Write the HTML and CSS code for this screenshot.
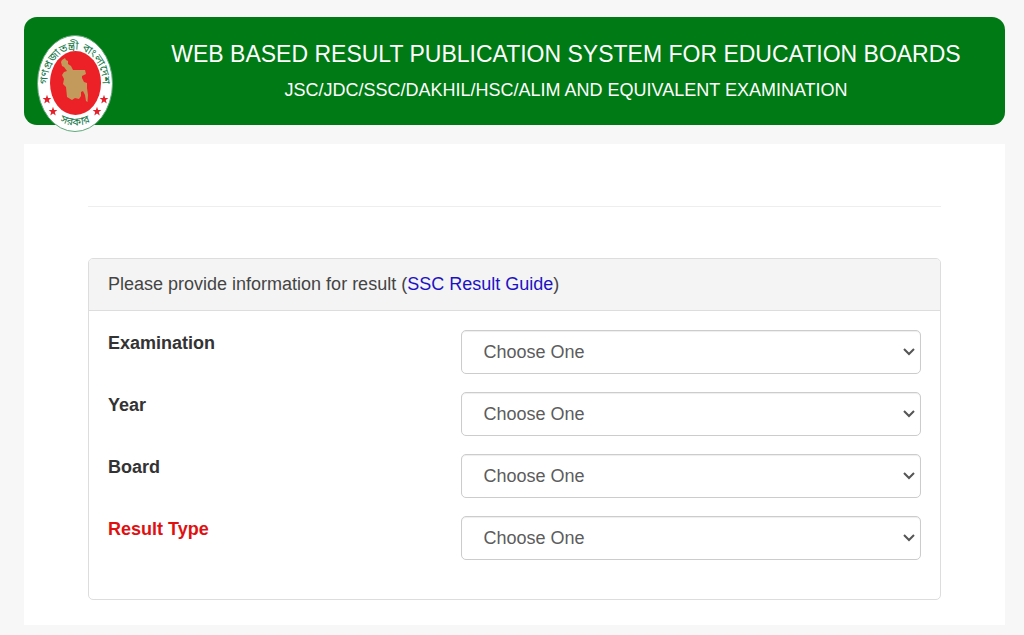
FILE: index.html
```html
<!DOCTYPE html>
<html lang="en">
<head>
<meta charset="utf-8">
<meta name="viewport" content="width=device-width, initial-scale=1">
<title>Web Based Result Publication System for Education Boards</title>
<link rel="stylesheet" href="styles.css">
</head>
<body>
<div class="page">
  <header class="banner">
    <svg class="seal" viewBox="0 0 76 97" role="img" aria-label="Government seal">
      <defs>
        <path id="arc-top" d="M11.800 59 A27.500 34 0 1 1 64.200 59"/>
        <path id="arc-bottom" d="M15 82 Q38 99 61 82"/>
      </defs>
      <ellipse cx="38" cy="48.500" rx="37.500" ry="48" fill="#fff" stroke="#5fa977"/>
      <ellipse cx="38.500" cy="48" rx="25.500" ry="32" fill="#ec2027"/>
      <path fill="#c39a5b" d="M24 27 L25 25 L28 23 L29 25 L31 26 L31 29 L34 31 L36 35 L48 35 L49 39 L45 41 L45 43 L47 47 L50 48 L50 53 L51 60 L50.500 67 L49 66 L48 60 L46 56 L44 57 L44 61 L42 64 L38 63 L35 65 L30 62 L29 52 L26 49 L27 44 L25 40 L27 37 L30 36 L27 32 L25 31 Z"/>
      <g class="seal-text">
        <text lang="bn"><textPath href="#arc-top" startOffset="50%" text-anchor="middle">গণপ্রজাতন্ত্রী বাংলাদেশ</textPath></text>
        <text lang="bn"><textPath href="#arc-bottom" startOffset="50%" text-anchor="middle">সরকার</textPath></text>
      </g>
      <g fill="#e3212b">
        <path id="star" d="M10 59.800 L11.100 62.900 L14.400 63 L11.800 65.100 L12.700 68.400 L10 66.500 L7.300 68.400 L8.200 65.100 L5.600 63 L8.900 62.900 Z"/>
        <use href="#star" x="6" y="12"/>
        <use href="#star" x="57"/>
        <use href="#star" x="50" y="12"/>
      </g>
    </svg>
    <div class="banner-text">
      <h1 class="title">WEB BASED RESULT PUBLICATION SYSTEM FOR EDUCATION BOARDS</h1>
      <p class="subtitle">JSC/JDC/SSC/DAKHIL/HSC/ALIM AND EQUIVALENT EXAMINATION</p>
    </div>
  </header>
  <main class="content">
    <hr class="divider">
    <section class="panel">
      <h2 class="panel-heading">Please provide information for result (<a class="guide" href="#">SSC Result Guide</a>)</h2>
      <form class="fields">
        <div class="field">
          <label class="label" for="exam">Examination</label>
          <div class="control">
            <select class="select" id="exam"><option>Choose One</option></select>
            <svg class="chevron" viewBox="0 0 12 8" aria-hidden="true"><path d="M1 1 L6 6 L11 1"/></svg>
          </div>
        </div>
        <div class="field">
          <label class="label" for="year">Year</label>
          <div class="control">
            <select class="select" id="year"><option>Choose One</option></select>
            <svg class="chevron" viewBox="0 0 12 8" aria-hidden="true"><path d="M1 1 L6 6 L11 1"/></svg>
          </div>
        </div>
        <div class="field">
          <label class="label" for="board">Board</label>
          <div class="control">
            <select class="select" id="board"><option>Choose One</option></select>
            <svg class="chevron" viewBox="0 0 12 8" aria-hidden="true"><path d="M1 1 L6 6 L11 1"/></svg>
          </div>
        </div>
        <div class="field">
          <label class="label label-alert" for="type">Result Type</label>
          <div class="control">
            <select class="select" id="type"><option>Choose One</option></select>
            <svg class="chevron" viewBox="0 0 12 8" aria-hidden="true"><path d="M1 1 L6 6 L11 1"/></svg>
          </div>
        </div>
      </form>
    </section>
  </main>
</div>
</body>
</html>
```
FILE: styles.css
```css
* { box-sizing: border-box; }

body {
  margin: 0;
  background: #f7f7f7;
  color: #444;
  font-family: "Liberation Sans", Arial, sans-serif;
  font-size: 18px;
  line-height: 24px;
}

.page {
  display: flex;
  flex-direction: column;
  gap: 19px;
  padding: 17px 19px 10px 24px;
}

.banner {
  display: flex;
  gap: 14px;
  padding: 18px 0 0 13px;
  background: #007a14;
  border-radius: 13px;
  color: #fff;
}

.seal {
  flex: none;
  width: 76px;
  height: 97px;
  margin-bottom: -7px;
  overflow: visible;
}

.seal-text {
  fill: #17784a;
  font-family: "Noto Sans Bengali", "Noto Sans", sans-serif;
  font-size: 11px;
}

.banner-text {
  flex: 1;
  text-align: center;
}

.title {
  margin: 4px 0 0;
  font-size: 23px;
  font-weight: 400;
  line-height: 30px;
}

.subtitle {
  margin: 9px 0 0;
}

.content {
  padding: 62px 64px 25px;
  background: #fff;
}

.divider {
  height: 1px;
  margin: 0 0 51px;
  border: 0;
  background: #eee;
}

.panel {
  border: 1px solid #ddd;
  border-radius: 5px;
}

.panel-heading {
  margin: 0;
  padding: 13px 19px 14px;
  border-bottom: 1px solid #ddd;
  border-radius: 4px 4px 0 0;
  background: #f4f4f4;
  font-size: 18px;
  font-weight: 400;
}

.guide {
  color: #1c12c4;
  text-decoration: none;
}

.fields {
  display: flex;
  flex-direction: column;
  gap: 18px;
  padding: 19px 19px 39px;
}

.field {
  display: grid;
  grid-template-columns: 10fr 13fr;
}

.label {
  padding-top: 1px;
  color: #333;
  font-weight: 700;
}

.label-alert { color: #e01010; }

.control {
  position: relative;
}

.select {
  display: block;
  appearance: none;
  width: 100%;
  height: 44px;
  padding: 0 40px 0 21px;
  border: 1px solid #ccc;
  border-radius: 5px;
  background: #fff;
  box-shadow: inset 0 1px 1px #eee;
  color: #5c5c5c;
  font: inherit;
}

.chevron {
  position: absolute;
  top: 18px;
  right: 6px;
  width: 12px;
  height: 8px;
  fill: none;
  stroke: #555;
  stroke-width: 2;
  pointer-events: none;
}
```
